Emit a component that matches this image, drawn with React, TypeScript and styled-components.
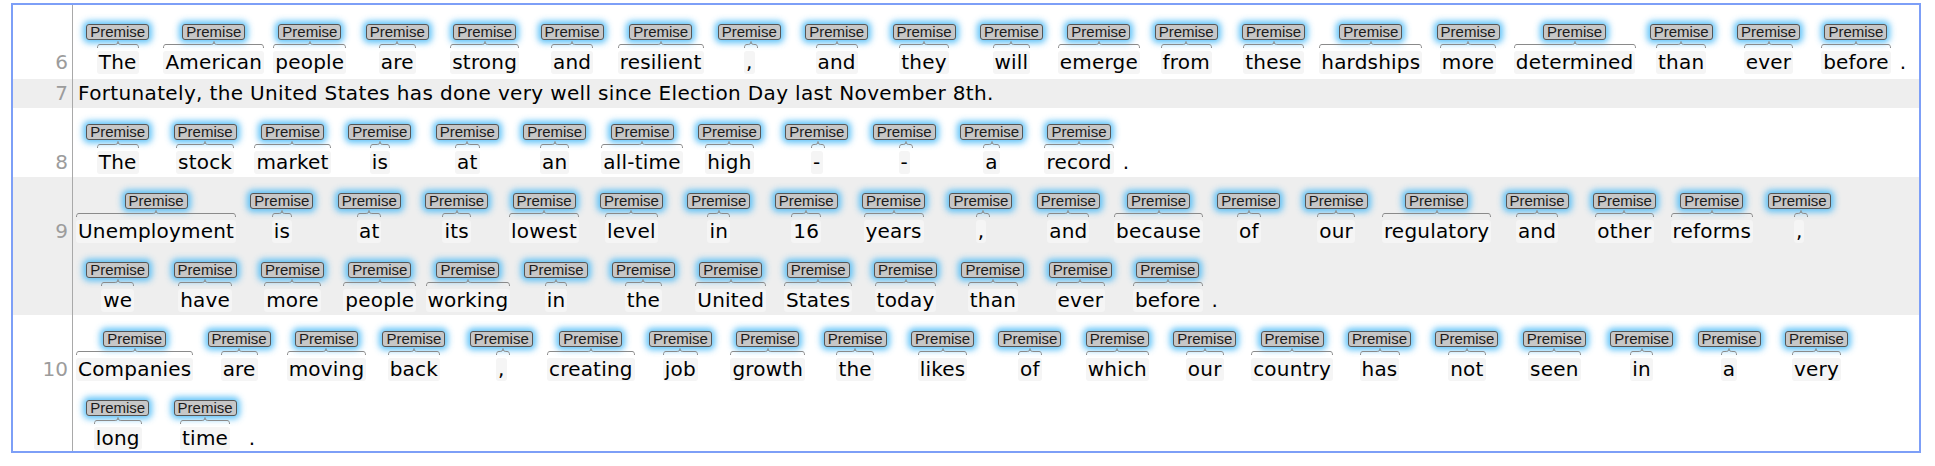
import { FC } from 'react';
import styled, { createGlobalStyle } from 'styled-components';

const GlobalStyle = createGlobalStyle`
  body {
    margin: 0;
    background: #ffffff;
  }
`;

const TEXT_FONT = `'DejaVu Sans', Verdana, sans-serif`;

const Frame = styled.div`
  margin: 3px 0 0 11px;
  width: 1910px;
  box-sizing: border-box;
  border: 2px solid #7d9ff7;
`;

const Row = styled.div<{ $shaded: boolean }>`
  display: flex;
  background: ${p => (p.$shaded ? '#eeeeee' : '#ffffff')};
`;

const LineNo = styled.div<{ $offset: number }>`
  flex: 0 0 60px;
  box-sizing: border-box;
  padding: ${p => p.$offset}px 4px 0 0;
  border-right: 1px solid #a9a9a9;
  text-align: right;
  font: 20px/23px ${TEXT_FONT};
  color: #9c9c9c;
`;

const Lines = styled.div`
  flex: 1;
  display: flex;
  flex-direction: column;
  padding-left: 3px;
`;

const PlainLine = styled.div`
  padding: 3px 0 3px 2px;
  font: 20px/23px ${TEXT_FONT};
  letter-spacing: 0.35px;
  color: #000;
  white-space: nowrap;
`;

const TokenLine = styled.div<{ $top: number; $bottom: number }>`
  display: flex;
  align-items: flex-end;
  gap: 4px;
  padding: ${p => p.$top}px 0 ${p => p.$bottom}px;
`;

const Chunk = styled.div`
  display: flex;
  flex-direction: column;
  align-items: center;
  min-width: 83.4px;
`;

const Label = styled.div`
  box-sizing: border-box;
  height: 16px;
  padding: 0 3px;
  border: 1px solid #555555;
  border-radius: 3px;
  background: #c7c7c7;
  box-shadow: 0 0 6px 3px rgba(62, 182, 246, 0.82);
  font: 15px/14px 'Liberation Sans', Arial, sans-serif;
  color: #1b1b1b;
  white-space: nowrap;
`;

const Span = styled.div`
  display: flex;
  flex-direction: column;
  margin-top: 1px;
`;

// width 0 + min-width 100% keeps the brace from widening the word box
const Brace = styled.div`
  display: flex;
  align-items: flex-start;
  width: 0;
  min-width: 100%;
  height: 7px;
  margin-bottom: 3px;

  svg {
    flex: 0 0 auto;
    overflow: visible;
  }
`;

const BraceBar = styled.div`
  flex: 1;
  margin-top: 3px;
  border-top: 1px solid #8a8a8a;
`;

const Word = styled.div`
  padding: 0 2px;
  border-radius: 3px;
  background: #f5f5f5;
  font: 20px/23px ${TEXT_FONT};
  letter-spacing: 0.2px;
  color: #000;
  white-space: nowrap;
`;

const Bare = styled.div`
  margin-left: -2px;
  font: 20px/23px ${TEXT_FONT};
  color: #000;
`;

const BRACE = '#8a8a8a';

const CurlyBrace: FC = () => (
  <Brace>
    <svg width="3" height="7">
      <path d="M0.5 7 C0.5 4.5 1.2 3.5 3 3.5" stroke={BRACE} fill="none" />
    </svg>
    <BraceBar />
    <svg width="8" height="7">
      <path d="M0 3.5 C2.8 3.5 4 3 4 0.5 C4 3 5.2 3.5 8 3.5" stroke={BRACE} fill="none" />
    </svg>
    <BraceBar />
    <svg width="3" height="7">
      <path d="M0 3.5 C1.8 3.5 2.5 4.5 2.5 7" stroke={BRACE} fill="none" />
    </svg>
  </Brace>
);

const Token: FC<{ text: string }> = ({ text }) => (
  <Chunk>
    <Label>Premise</Label>
    <Span>
      <CurlyBrace />
      <Word>{text}</Word>
    </Span>
  </Chunk>
);

type Line = { words: string[]; tail?: string };
type Sentence = { n: number; shaded: boolean; plain?: string; lines?: Line[] };

const sentences: Sentence[] = [
  {
    n: 6,
    shaded: false,
    lines: [
      {
        words: [
          'The', 'American', 'people', 'are', 'strong', 'and', 'resilient', ',', 'and', 'they',
          'will', 'emerge', 'from', 'these', 'hardships', 'more', 'determined', 'than', 'ever', 'before',
        ],
        tail: '.',
      },
    ],
  },
  {
    n: 7,
    shaded: true,
    plain: 'Fortunately, the United States has done very well since Election Day last November 8th.',
  },
  {
    n: 8,
    shaded: false,
    lines: [
      {
        words: ['The', 'stock', 'market', 'is', 'at', 'an', 'all-time', 'high', '-', '-', 'a', 'record'],
        tail: '.',
      },
    ],
  },
  {
    n: 9,
    shaded: true,
    lines: [
      {
        words: [
          'Unemployment', 'is', 'at', 'its', 'lowest', 'level', 'in', '16', 'years', ',', 'and',
          'because', 'of', 'our', 'regulatory', 'and', 'other', 'reforms', ',',
        ],
      },
      {
        words: [
          'we', 'have', 'more', 'people', 'working', 'in', 'the', 'United', 'States', 'today',
          'than', 'ever', 'before',
        ],
        tail: '.',
      },
    ],
  },
  {
    n: 10,
    shaded: false,
    lines: [
      {
        words: [
          'Companies', 'are', 'moving', 'back', ',', 'creating', 'job', 'growth', 'the', 'likes',
          'of', 'which', 'our', 'country', 'has', 'not', 'seen', 'in', 'a', 'very',
        ],
      },
      { words: ['long', 'time'], tail: '.' },
    ],
  },
];

const App: FC = () => (
  <>
    <GlobalStyle />
    <Frame>
      {sentences.map((s, si) => {
        const first = si === 0;
        const last = si === sentences.length - 1;
        const top = first ? 19 : 16;
        return (
          <Row key={s.n} $shaded={s.shaded}>
            <LineNo $offset={s.plain ? 3 : top + 27}>{s.n}</LineNo>
            <Lines>
              {s.plain && <PlainLine>{s.plain}</PlainLine>}
              {s.lines?.map((line, li) => (
                <TokenLine
                  key={li}
                  $top={li === 0 ? top : 16}
                  $bottom={first ? 5 : last && li === s.lines!.length - 1 ? 1 : 3}
                >
                  {line.words.map((w, wi) => (
                    <Token key={wi} text={w} />
                  ))}
                  {line.tail && <Bare>{line.tail}</Bare>}
                </TokenLine>
              ))}
            </Lines>
          </Row>
        );
      })}
    </Frame>
  </>
);

export default App;
